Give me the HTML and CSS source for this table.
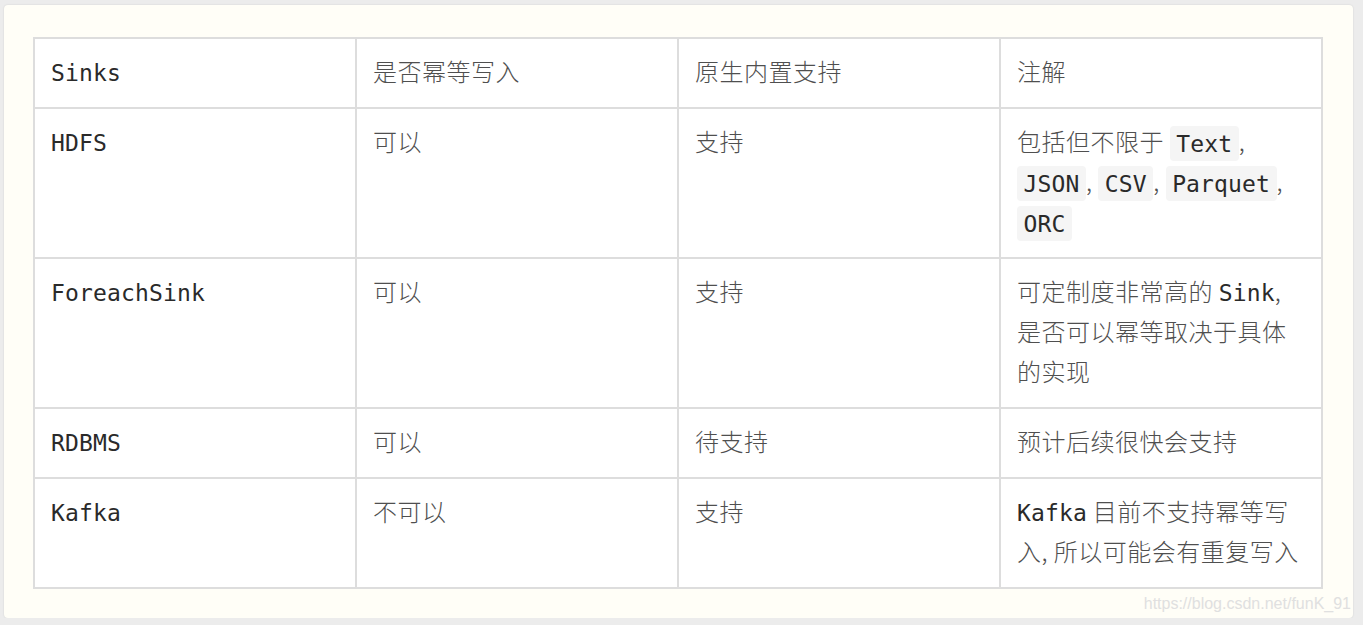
FILE: index.html
```html
<!DOCTYPE html>
<html lang="zh-CN">
<head>
<meta charset="utf-8">
<title>Sinks</title>
<link rel="stylesheet" href="styles.css">
</head>
<body>
<div class="card">
  <table class="sinks">
    <colgroup><col class="c"><col class="c"><col class="c"><col class="c"></colgroup>
    <tr>
      <td><span class="m">Sinks</span></td>
      <td>是否幂等写入</td>
      <td>原生内置支持</td>
      <td>注解</td>
    </tr>
    <tr>
      <td><span class="m">HDFS</span></td>
      <td>可以</td>
      <td>支持</td>
      <td>包括但不限于 <code>Text</code>, <code>JSON</code>, <code>CSV</code>, <code>Parquet</code>, <code>ORC</code></td>
    </tr>
    <tr>
      <td><span class="m">ForeachSink</span></td>
      <td>可以</td>
      <td>支持</td>
      <td>可定制度非常高的 <span class="m">Sink</span>, 是否可以幂等取决于具体的实现</td>
    </tr>
    <tr>
      <td><span class="m">RDBMS</span></td>
      <td>可以</td>
      <td>待支持</td>
      <td>预计后续很快会支持</td>
    </tr>
    <tr>
      <td><span class="m">Kafka</span></td>
      <td>不可以</td>
      <td>支持</td>
      <td><span class="m">Kafka</span> 目前不支持幂等写入, 所以可能会有重复写入</td>
    </tr>
  </table>
  <div class="watermark">https://blog.csdn.net/funK_91</div>
</div>
</body>
</html>
```

FILE: styles.css
```css
html, body {
  margin: 0;
  padding: 0;
  background: #ececec;
}
body {
  padding: 5px 0 0 4px;
}
.card {
  position: relative;
  box-sizing: border-box;
  width: 1349px;
  height: 613px;
  background: #fffef7;
  border-radius: 4px;
  box-shadow: 0 0 2px rgba(0,0,0,0.12);
  padding: 32px 0 0 29px;
}
.sinks {
  border-collapse: collapse;
  table-layout: fixed;
  width: 1288px;
  background: #fff;
}
.sinks col.c {
  width: 322px;
}
.sinks td {
  border: 2px solid #dddddd;
  padding: 12px 15px 16px 16px;
  vertical-align: top;
  font-family: "Noto Sans CJK SC", "Noto Sans", sans-serif;
  font-weight: 300;
  font-size: 24px;
  letter-spacing: 0.5px;
  line-height: 40px;
  color: #4f4f4f;
}
.m, code {
  font-family: "DejaVu Sans Mono", "Liberation Mono", monospace;
  font-size: 23px;
  font-weight: 400;
  letter-spacing: 0.15px;
  line-height: 20px;
  color: #2a2a2a;
}
code {
  background: #f5f5f5;
  border-radius: 4px;
  padding: 4.5px 6.5px;
}
.watermark {
  position: absolute;
  right: 2px;
  bottom: 5px;
  font-family: "Liberation Sans", Arial, sans-serif;
  font-size: 16px;
  color: #e0e0e0;
}
```
